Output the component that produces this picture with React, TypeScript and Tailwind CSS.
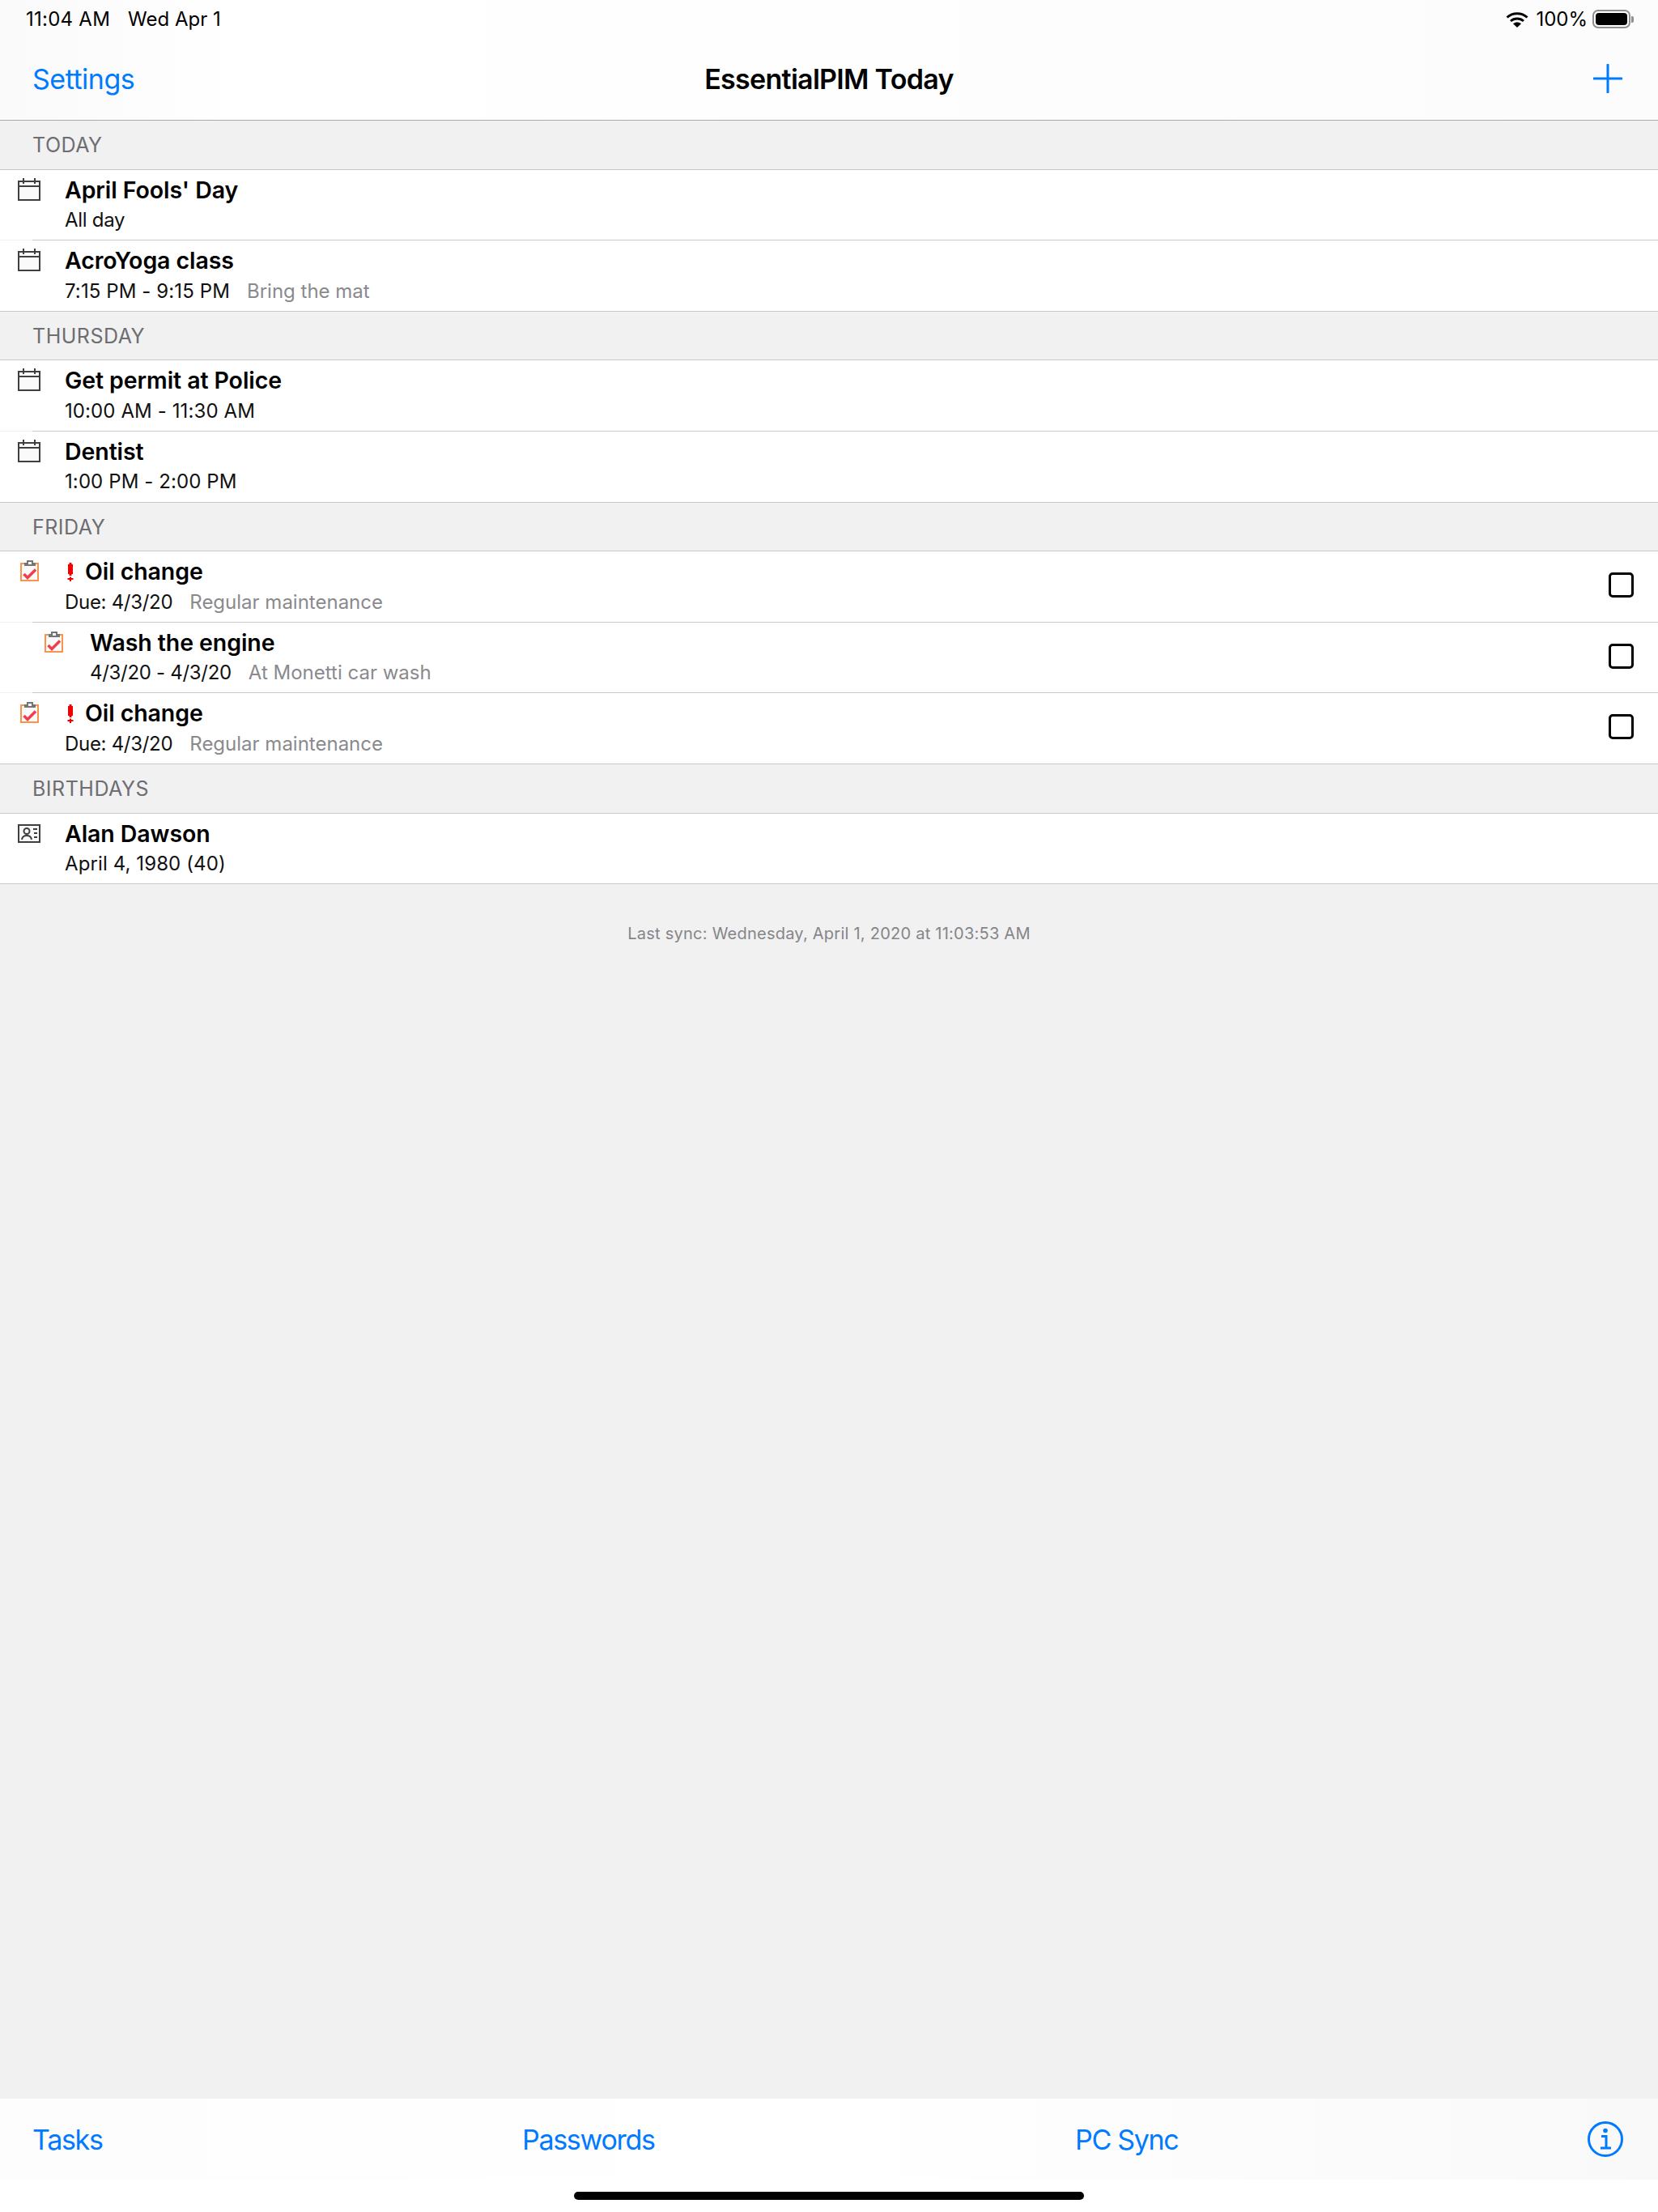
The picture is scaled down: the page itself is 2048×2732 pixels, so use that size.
const font = "font-['Inter','Liberation_Sans',sans-serif]";

function CalendarIcon() {
  return (
    <svg width="28" height="28" viewBox="0 0 28 28" fill="none" className="block">
      <rect x="1" y="4" width="26" height="23" fill="#fafafa" stroke="#3f3f3f" strokeWidth="2" />
      <path d="M1 10h26" stroke="#3f3f3f" strokeWidth="2" />
      <path d="M7 0v7M21 0v7" stroke="#3f3f3f" strokeWidth="2" />
    </svg>
  );
}

function TaskIcon() {
  return (
    <svg width="24" height="27" viewBox="0 0 24 27" fill="none" className="block">
      <rect x="1" y="4" width="21" height="21" fill="#fafafa" stroke="#f9954a" strokeWidth="2" />
      <path d="M6 6V4h3V1h6v3h3v2z" fill="#fafafa" stroke="#757575" strokeWidth="2" />
      <path d="M4.500 17l4.500 4.500L19 11.500" stroke="#ef3e4a" strokeWidth="3.500" />
    </svg>
  );
}

function PriorityIcon() {
  return (
    <svg width="8" height="23" viewBox="0 0 8 23" className="block" fill="#f00000">
      <path d="M2.500 0h3v2h1.500v12H5.500v2h-3v-2H1V2h1.500z" />
      <path d="M3 17.500h2v1.500h2.500v2H5v2H3v-2H.5v-2H3z" />
    </svg>
  );
}

function ContactIcon() {
  return (
    <svg width="28" height="23" viewBox="0 0 28 23" fill="none" className="block">
      <rect x="1" y="1" width="26" height="21" fill="#fafafa" stroke="#3f3f3f" strokeWidth="2" />
      <circle cx="11" cy="8.500" r="3.500" stroke="#3f3f3f" strokeWidth="2" />
      <path d="M5 19c.5-3.500 2.500-5 6-5s5.500 1.500 6 5" stroke="#3f3f3f" strokeWidth="2" />
      <path d="M19 6h5M20 11h4M20 16h4" stroke="#3f3f3f" strokeWidth="2" />
    </svg>
  );
}

function WifiIcon() {
  return (
    <svg width="28" height="20" viewBox="0 0 28 20" fill="none" className="block">
      <path d="M1.500 7.500C8.500 1 19.500 1 26.500 7.500" stroke="#000" strokeWidth="3" />
      <path d="M6 12c4.500-4 11.500-4 16 0" stroke="#000" strokeWidth="3" />
      <path d="M14 20l-5-4.800c3-2.400 7-2.400 10 0z" fill="#000" />
    </svg>
  );
}

function Battery() {
  return (
    <div className="flex items-center">
      <div className="h-[23px] w-[47px] rounded-[7px] border-2 border-[#8e8e8e] p-[2px]">
        <div className="h-full w-full rounded-[4px] bg-black" />
      </div>
      <div className="ml-[1px] h-[8px] w-[3px] rounded-r-[2px] bg-[#8e8e8e]" />
    </div>
  );
}

function InfoIcon() {
  return (
    <svg width="44" height="44" viewBox="0 0 44 44" fill="none" className="block">
      <circle cx="22" cy="22" r="20.500" stroke="#007aff" strokeWidth="3" />
      <circle cx="22" cy="11.500" r="2.800" fill="#007aff" />
      <path d="M17 18.500h6V32M16 33h13" stroke="#007aff" strokeWidth="3" />
    </svg>
  );
}

type Item = {
  kind: "event" | "task" | "contact";
  title: string;
  sub: string;
  note?: string;
  priority?: boolean;
  child?: boolean;
  tight?: boolean;
};

const sections: { name: string; items: Item[] }[] = [
  {
    name: "TODAY",
    items: [
      { kind: "event", title: "April Fools' Day", sub: "All day", tight: true },
      { kind: "event", title: "AcroYoga class", sub: "7:15 PM - 9:15 PM", note: "Bring the mat" },
    ],
  },
  {
    name: "THURSDAY",
    items: [
      { kind: "event", title: "Get permit at Police", sub: "10:00 AM - 11:30 AM" },
      { kind: "event", title: "Dentist", sub: "1:00 PM - 2:00 PM" },
    ],
  },
  {
    name: "FRIDAY",
    items: [
      { kind: "task", title: "Oil change", sub: "Due: 4/3/20", note: "Regular maintenance", priority: true, tight: true },
      { kind: "task", title: "Wash the engine", sub: "4/3/20 - 4/3/20", note: "At Monetti car wash", child: true, tight: true },
      { kind: "task", title: "Oil change", sub: "Due: 4/3/20", note: "Regular maintenance", priority: true, tight: true },
    ],
  },
  {
    name: "BIRTHDAYS",
    items: [{ kind: "contact", title: "Alan Dawson", sub: "April 4, 1980 (40)" }],
  },
];

function Row({ item }: { item: Item }) {
  return (
    <div className="flex h-[86.67px] items-start bg-white">
      <div
        className={
          item.child
            ? "w-[111px] pl-[55px] pt-[11px]"
            : item.kind === "task"
              ? "w-[80px] pl-[25px] pt-[11px]"
              : item.kind === "contact"
                ? "w-[80px] pl-[22px] pt-[13px]"
                : "w-[80px] pl-[22px] pt-[10px]"
        }
      >
        {item.kind === "event" && <CalendarIcon />}
        {item.kind === "task" && <TaskIcon />}
        {item.kind === "contact" && <ContactIcon />}
      </div>
      <div className="flex-1 pt-[8px]">
        <div className="flex h-[34px] items-center text-[28.5px] font-semibold leading-[34px] tracking-[-0.08px] text-black">
          {item.priority && (
            <span className="ml-[3px] mr-[14px]">
              <PriorityIcon />
            </span>
          )}
          {item.title}
        </div>
        <div className="mt-[5.5px] flex h-[30px] items-center text-[24px] leading-[30px] text-[#111]">
          <span className={item.tight ? "tracking-[-0.3px]" : "tracking-[0.1px]"}>{item.sub}</span>
          {item.note && <span className="ml-[21px] text-[#8a8a8e]">{item.note}</span>}
        </div>
      </div>
      {item.kind === "task" && (
        <div className="mr-[30px] mt-[26px] h-[31px] w-[31px] rounded-[5px] border-[3px] border-black" />
      )}
    </div>
  );
}

export default function App() {
  return (
    <div className={`${font} flex h-[2732px] w-[2048px] flex-col bg-[#f1f1f1]`}>
      <header className="h-[149px] border-b border-[#a9a9ab] bg-gradient-to-r from-[#fafafa] via-white via-15% to-[#fcfcfc]">
        <div className="flex h-[47px] items-center justify-between pl-[32px] pr-[30px] text-[24px] text-black">
          <div className="flex gap-[22px]">
            <span className="tracking-[0.25px]">11:04 AM</span>
            <span>Wed Apr 1</span>
          </div>
          <div className="flex items-center gap-[6px]">
            <WifiIcon />
            <span className="ml-[3px]">100%</span>
            <Battery />
          </div>
        </div>
        <div className="relative flex h-[101px] items-center justify-between pb-[1px] pl-[40px] pr-[44px]">
          <span className="text-[34px] tracking-[-0.5px] text-[#007aff]">Settings</span>
          <span className="absolute inset-x-0 text-center text-[34px] font-semibold tracking-[-0.7px] text-black">
            EssentialPIM Today
          </span>
          <svg width="36" height="36" viewBox="0 0 36 36" fill="none" className="block">
            <path d="M18 1v34M1 18h34" stroke="#007aff" strokeWidth="3" strokeLinecap="round" />
          </svg>
        </div>
      </header>

      {sections.map((section) => (
        <section key={section.name}>
          <div className="flex h-[59.5px] items-center pl-[40px] pt-[2px] text-[25px] tracking-[0.5px] text-[#6d6d72]">
            {section.name}
          </div>
          <div className="h-px bg-[#c8c8cc]" />
          {section.items.map((item, i) => (
            <div key={i}>
              <Row item={item} />
              <div className={i === section.items.length - 1 ? "h-px bg-[#c8c8cc]" : "ml-[40px] h-px bg-[#c8c8cc]"} />
            </div>
          ))}
        </section>
      ))}

      <p className="mt-[46px] text-center text-[20px] tracking-[0.24px] text-[#85858a]">
        Last sync: Wednesday, April 1, 2020 at 11:03:53 AM
      </p>

      <div className="flex-1" />

      <footer className="h-[140px] bg-white">
        <div className="grid h-[100px] grid-cols-[605px_683px_1fr] items-center bg-gradient-to-r from-[#fdfdfd] via-white to-[#f9f9f9] pl-[40px] pr-[43px] text-[34px] tracking-[-1.3px] text-[#007aff]">
          <span>Tasks</span>
          <span>Passwords</span>
          <div className="flex items-center justify-between">
            <span>PC Sync</span>
            <InfoIcon />
          </div>
        </div>
        <div className="mx-auto mt-[15px] h-[10px] w-[630px] rounded-full bg-black" />
      </footer>
    </div>
  );
}
